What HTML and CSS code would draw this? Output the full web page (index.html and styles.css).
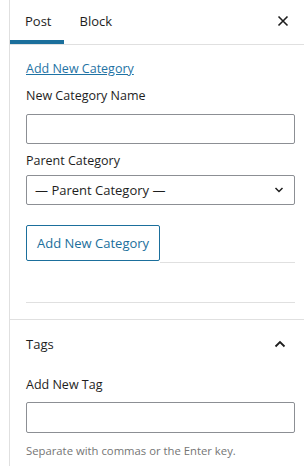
FILE: index.html
```html
<!DOCTYPE html>
<html>
<head>
<meta charset="utf-8">
<link rel="stylesheet" href="styles.css">
</head>
<body>
<div class="sidebar">
  <div class="tabs">
    <div class="tab active">Post</div>
    <div class="tab">Block</div>
    <div class="spacer"></div>
    <div class="close">
      <svg width="12" height="12" viewBox="0 0 12 12"><path d="M1.5 1.5 L10.5 10.5 M10.5 1.5 L1.5 10.5" stroke="#1e1e1e" stroke-width="1.6" fill="none"/></svg>
    </div>
  </div>

  <div class="panel categories">
    <a class="link" href="#">Add New Category</a>
    <div class="label first">New Category Name</div>
    <div class="input"></div>
    <div class="label">Parent Category</div>
    <div class="select">
      <span>— Parent Category —</span>
      <svg width="10" height="6" viewBox="0 0 10 6"><path d="M1.5 1 L5 4.5 L8.5 1" stroke="#1e1e1e" stroke-width="1.5" fill="none"/></svg>
    </div>
    <div class="btn-row">
      <div class="button">Add New Category</div>
      <div class="fill"></div>
    </div>
    <div class="rule"></div>
  </div>

  <div class="panel tags">
    <div class="panel-head">
      <span>Tags</span>
      <svg width="12" height="8" viewBox="0 0 12 8"><path d="M1.5 6.5 L6 2 L10.5 6.5" stroke="#1e1e1e" stroke-width="1.8" fill="none"/></svg>
    </div>
    <div class="label">Add New Tag</div>
    <div class="input tag-input"></div>
    <div class="help">Separate with commas or the Enter key.</div>
  </div>
</div>
</body>
</html>
```

FILE: styles.css
```css
html, body {
  margin: 0;
  padding: 0;
  background: #fff;
}
body {
  font-family: "Open Sans", "Noto Sans", sans-serif;
  font-size: 12.5px;
  color: #1e1e1e;
}
.sidebar {
  margin-left: 9px;
  border-left: 1px solid #e0e0e0;
  min-height: 466px;
}
.tabs {
  display: flex;
  align-items: stretch;
  height: 44px;
  border-bottom: 1px solid #e0e0e0;
}
.tab {
  display: flex;
  align-items: center;
  padding: 0 13px 0 15px;
  font-size: 13px;
  height: 44px;
  box-sizing: border-box;
  padding-bottom: 3px;
}
.tab.active {
  box-shadow: inset 0 -4px 0 #1b6f9c;
}
.spacer { flex: 1; }
.close {
  display: flex;
  align-items: center;
  width: 40px;
  justify-content: center;
  padding-right: 1px;
  padding-bottom: 3px;
}
.panel {
  padding: 0 9px 0 16px;
  border-bottom: 1px solid #e0e0e0;
}
.categories {
  padding-top: 14px;
}
.link {
  display: block;
  line-height: 20px;
  color: #1f73a4;
  text-decoration: underline;
  text-underline-offset: 1px;
}
.label {
  line-height: 20px;
  margin-top: 7px;
  margin-bottom: 4px;
}
.label.first { margin-bottom: 8px; }
.input {
  height: 30px;
  box-sizing: border-box;
  border: 1px solid #8c8f94;
  border-radius: 2px;
}
.select {
  height: 30px;
  box-sizing: border-box;
  border: 1px solid #8c8f94;
  border-radius: 2px;
  display: flex;
  align-items: center;
  justify-content: space-between;
  padding: 0 10px 0 8px;
  font-size: 13px;
}
.btn-row {
  display: flex;
  margin-top: 20px;
  height: 38px;
}
.button {
  height: 36px;
  box-sizing: border-box;
  border: 1px solid #1b6f9c;
  border-radius: 2px;
  color: #1b6f9c;
  display: flex;
  align-items: center;
  padding: 0 10px;
  font-size: 13px;
}
.fill {
  flex: 1;
  border-bottom: 1px solid #e0e0e0;
  height: 37px;
}
.rule {
  margin-top: 39px;
  border-top: 1px solid #e0e0e0;
  height: 16px;
}
.tags {
  border-bottom: none;
}
.panel-head {
  height: 48px;
  display: flex;
  align-items: center;
  justify-content: space-between;
  padding-right: 9px;
  font-size: 13px;
}
.tags .label {
  margin-top: 7px;
  margin-bottom: 7px;
}
.tag-input {
  height: 31px;
}
.help {
  margin-top: 9px;
  font-size: 11.3px;
  line-height: 18px;
  color: #757575;
}
```
